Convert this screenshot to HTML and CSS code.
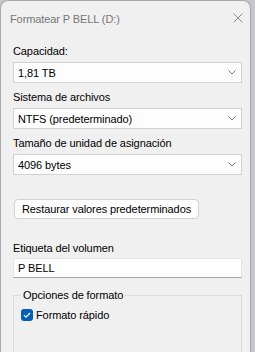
FILE: index.html
```html
<!DOCTYPE html>
<html lang="es">
<head>
<meta charset="utf-8">
<title>Formatear P BELL (D:)</title>
<link rel="stylesheet" href="styles.css">
</head>
<body>
<div class="window">
  <div class="titlebar">
    <span class="title">Formatear P BELL (D:)</span>
    <svg class="close" width="10" height="10" viewBox="0 0 10 10"><path d="M0.5 0.5 L9.5 9.5 M9.5 0.5 L0.5 9.5" stroke="#8a8a8a" stroke-width="1" fill="none"/></svg>
  </div>
  <div class="content">
    <div class="field">
      <div class="label">Capacidad:</div>
      <div class="combo"><span>1,81 TB</span><svg class="chev" width="8" height="5" viewBox="0 0 8 5"><path d="M0.5 0.5 L4 4 L7.5 0.5" stroke="#7a7a7a" fill="none"/></svg></div>
    </div>
    <div class="field">
      <div class="label">Sistema de archivos</div>
      <div class="combo"><span>NTFS (predeterminado)</span><svg class="chev" width="8" height="5" viewBox="0 0 8 5"><path d="M0.5 0.5 L4 4 L7.5 0.5" stroke="#7a7a7a" fill="none"/></svg></div>
    </div>
    <div class="field">
      <div class="label">Tamaño de unidad de asignación</div>
      <div class="combo"><span>4096 bytes</span><svg class="chev" width="8" height="5" viewBox="0 0 8 5"><path d="M0.5 0.5 L4 4 L7.5 0.5" stroke="#7a7a7a" fill="none"/></svg></div>
    </div>
    <div class="btn">Restaurar valores predeterminados</div>
    <div class="label vol">Etiqueta del volumen</div>
    <div class="input">P BELL</div>
    <fieldset class="group">
      <legend>Opciones de formato</legend>
      <div class="check">
        <span class="box"><svg width="12" height="12" viewBox="0 0 12 12"><path d="M3 6.2 L5 8.2 L9 4" stroke="#fff" stroke-width="1.2" fill="none"/></svg></span>
        <span>Formato rápido</span>
      </div>
    </fieldset>
  </div>
</div>
</body>
</html>
```

FILE: styles.css
```css
html, body {
  margin: 0;
  padding: 0;
}
body {
  background: #c4c8ce;
  width: 255px;
  height: 352px;
  overflow: hidden;
  font-family: "Liberation Sans", Arial, sans-serif;
  font-size: 11px;
  letter-spacing: -0.1px;
  color: #000;
}
.window {
  width: 249px;
  height: 351px;
  background: #f0f0f0;
  border: 1px solid #a9a9a9;
  border-bottom: none;
  border-radius: 8px 8px 0 0;
  overflow: hidden;
}
.titlebar {
  height: 34px;
  display: flex;
  align-items: center;
  justify-content: space-between;
  padding: 0 7px 0 9px;
  box-sizing: border-box;
}
.title {
  font-size: 11px;
  color: #767676;
  padding-top: 1px;
}
.close {
  display: block;
}
.content {
  padding: 8px 0 0 12px;
  width: 229px;
}
.field {
  display: flex;
  flex-direction: column;
  gap: 3px;
  margin-bottom: 6px;
}
.label {
  line-height: 16px;
  height: 16px;
}
.combo {
  height: 21px;
  box-sizing: border-box;
  background: #fdfdfd;
  border: 1px solid #d2d2d2;
  display: flex;
  align-items: center;
  justify-content: space-between;
  padding: 0 5px 0 4px;
}
.chev {
  display: block;
}
.btn {
  margin-top: 24px;
  margin-left: 1px;
  width: 185px;
  height: 20px;
  box-sizing: border-box;
  border: 1px solid #d0d0d0;
  border-radius: 4px;
  background: #fdfdfd;
  display: flex;
  align-items: center;
  justify-content: center;
  white-space: nowrap;
}
.vol {
  margin-top: 21px;
}
.input {
  margin-top: 2px;
  height: 20px;
  box-sizing: border-box;
  background: #fff;
  border: 1px solid #e4e4e4;
  border-bottom-color: #a8a8a8;
  display: flex;
  align-items: center;
  padding-left: 4px;
}
.group {
  margin: 9px 0 0 0;
  padding: 6px 7px 0 7px;
  border: 1px solid #dadada;
  height: 80px;
  min-width: 0;
}
.group legend {
  padding: 0 2px;
  margin-left: 0;
  line-height: 16px;
}
.check {
  display: flex;
  align-items: center;
  gap: 3px;
}
.box {
  width: 12px;
  height: 12px;
  border-radius: 3px;
  background: #005fb8;
  display: block;
}
.box svg {
  display: block;
}
```
